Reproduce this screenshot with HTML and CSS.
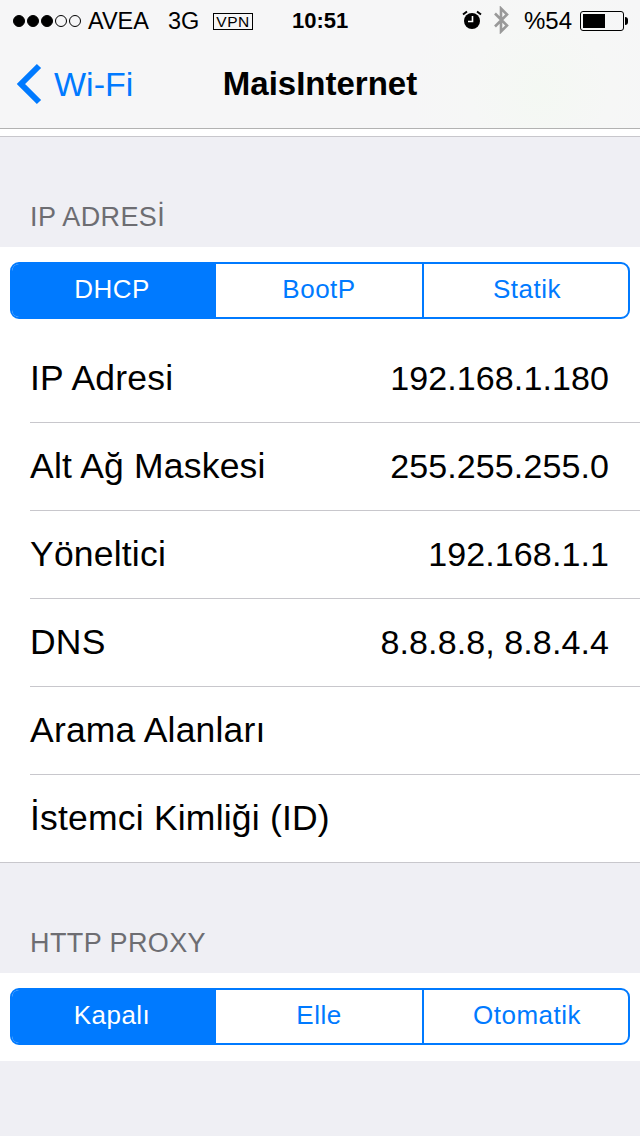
FILE: index.html
```html
<!DOCTYPE html>
<html lang="tr">
<head>
  <meta charset="UTF-8" />
  <title>MaisInternet</title>
  <link rel="stylesheet" href="styles.css">
</head>
<body>
  <div class="top">
    <!-- Status bar -->
    <div class="status">
      <div class="status-left">
        <span class="dots"><i class="on"></i><i class="on"></i><i class="on"></i><i></i><i></i></span>
        <span class="carrier">AVEA</span>
        <span class="net">3G</span>
        <span class="vpn">VPN</span>
      </div>
      <div class="clock">10:51</div>
      <div class="status-right">
        <svg class="alarm" width="20" height="20" viewBox="0 0 20 20">
          <circle cx="10" cy="11" r="8" fill="#000"/>
          <path d="M1 4.5 L5 1.5 M19 4.5 L15 1.5" stroke="#000" stroke-width="2" fill="none"/>
          <path d="M10.5 6 V11.5 H6" stroke="#fff" stroke-width="1.6" fill="none"/>
        </svg>
        <svg class="bt" width="16" height="28" viewBox="0 0 16 28">
          <path d="M2 7.5 L14 19.5 L8 25.5 V2.5 L14 8.5 L2 20.5" stroke="#999" stroke-width="2.6" fill="none"/>
        </svg>
        <span class="pct">%54</span>
        <span class="battery"><span class="level"></span></span>
        <span class="nub"></span>
      </div>
    </div>

    <!-- Navigation -->
    <div class="nav">
      <div class="back">
        <svg width="28" height="42" viewBox="0 0 28 42">
          <path d="M24 3 L6 21 L24 39" stroke="#007aff" stroke-width="6" fill="none"/>
        </svg>
        <span>Wi-Fi</span>
      </div>
      <div class="title">MaisInternet</div>
    </div>
  </div>
  <div class="strip"></div>

  <div class="section-label">IP ADRESİ</div>
  <div class="group">
    <div class="segments">
      <div class="seg active">DHCP</div>
      <div class="seg">BootP</div>
      <div class="seg">Statik</div>
    </div>
    <div class="rows">
      <div class="row"><span class="key">IP Adresi</span><span>192.168.1.180</span></div>
      <div class="row"><span class="key">Alt Ağ Maskesi</span><span>255.255.255.0</span></div>
      <div class="row"><span class="key">Yöneltici</span><span>192.168.1.1</span></div>
      <div class="row"><span class="key">DNS</span><span>8.8.8.8, 8.8.4.4</span></div>
      <div class="row"><span class="key">Arama Alanları</span></div>
      <div class="row"><span class="key">İstemci Kimliği (ID)</span></div>
    </div>
  </div>

  <div class="section-label">HTTP PROXY</div>
  <div class="group proxy">
    <div class="segments">
      <div class="seg active">Kapalı</div>
      <div class="seg">Elle</div>
      <div class="seg">Otomatik</div>
    </div>
  </div>
</body>
</html>
```

FILE: styles.css
```css
body {
  margin: 0;
  height: 1136px;
  overflow: hidden;
  background: #efeff4;
  color: #000;
  font-family: "Liberation Sans", Arial, sans-serif;
}

/* top bar */
.top {
  height: 128px;
  background: radial-gradient(circle at 540px 90px, #f4f8f3 0, #f6f7f6 70px, rgba(246, 247, 246, 0) 130px), #f6f6f7;
  border-bottom: 1px solid #b2b2b2;
}
.status {
  height: 40px;
  box-sizing: border-box;
  display: flex;
  align-items: center;
  justify-content: space-between;
  font-size: 23.5px;
  padding: 2px 0 0 13px;
  position: relative;
}
.status-left {
  display: flex;
  align-items: center;
}
.dots {
  display: flex;
  gap: 2px;
  margin-right: 7px;
}
.dots i {
  width: 10px;
  height: 10px;
  border: 1px solid #000;
  border-radius: 50%;
}
.dots i.on {
  background: #000;
}
.net {
  margin-left: 19px;
}
.vpn {
  margin-left: 14px;
  border: 1px solid #000;
  font-size: 15.5px;
  line-height: 15px;
  height: 15px;
  padding: 0 2px;
  letter-spacing: 0.5px;
}
.clock {
  position: absolute;
  left: 292px;
  font-size: 22px;
  font-weight: bold;
}
.status-right {
  display: flex;
  align-items: center;
  padding-right: 12px;
}
.alarm,
.bt {
  margin-top: -2px;
}
.bt {
  margin-left: 11px;
}
.pct {
  margin-left: 15px;
  font-size: 24px;
}
.battery {
  margin-left: 8px;
  border: 1px solid #000;
  border-radius: 3px;
  padding: 2px;
  display: block;
  width: 38px;
  height: 14px;
}
.level {
  display: block;
  width: 22px;
  height: 14px;
  background: #000;
}
.nub {
  width: 3px;
  height: 8px;
  background: #000;
  border-radius: 0 3px 3px 0;
  margin-left: 1px;
}
.nav {
  height: 88px;
  position: relative;
  display: flex;
  align-items: center;
  justify-content: center;
}
.back {
  position: absolute;
  left: 15px;
  top: 23px;
  display: flex;
  align-items: center;
  gap: 11px;
  color: #007aff;
  font-size: 34px;
}
.title {
  font-size: 33px;
  font-weight: bold;
  margin-top: -1px;
}
.strip {
  height: 7px;
  background: #fff;
  border-bottom: 1px solid #c8c7cc;
}

/* sections */
.section-label {
  height: 110px;
  box-sizing: border-box;
  display: flex;
  align-items: flex-end;
  padding: 0 30px 14px;
  font-size: 27px;
  line-height: 31px;
  letter-spacing: 0.4px;
  color: #6d6d72;
}
.group {
  background: #fff;
  padding-top: 15px;
  border-bottom: 1px solid #c8c7cc;
}
.group.proxy {
  border-bottom: 0;
  padding-bottom: 16px;
}
.segments {
  display: grid;
  grid-template-columns: 204px 208px 1fr;
  margin: 0 10px;
  height: 57px;
  box-sizing: border-box;
  border: 2px solid #007aff;
  border-radius: 9px;
  overflow: hidden;
}
.seg {
  display: flex;
  align-items: center;
  justify-content: center;
  padding-bottom: 2px;
  font-size: 26px;
  letter-spacing: 0.5px;
  color: #007aff;
}
.seg:nth-child(2) {
  border-right: 2px solid #007aff;
}
.seg:nth-child(3) {
  padding-left: 2px;
}
.seg.active {
  background: #007aff;
  color: #fff;
  padding-right: 4px;
}
.rows {
  margin-top: 16px;
  padding-left: 30px;
}
.row {
  height: 88px;
  box-sizing: border-box;
  display: flex;
  align-items: center;
  justify-content: space-between;
  padding-right: 31px;
  font-size: 34px;
  letter-spacing: 0.1px;
  border-bottom: 1px solid #c8c7cc;
}
.row:last-child {
  height: 87px;
  border-bottom: 0;
}
.key {
  font-size: 35.5px;
  letter-spacing: 0.2px;
}
```
